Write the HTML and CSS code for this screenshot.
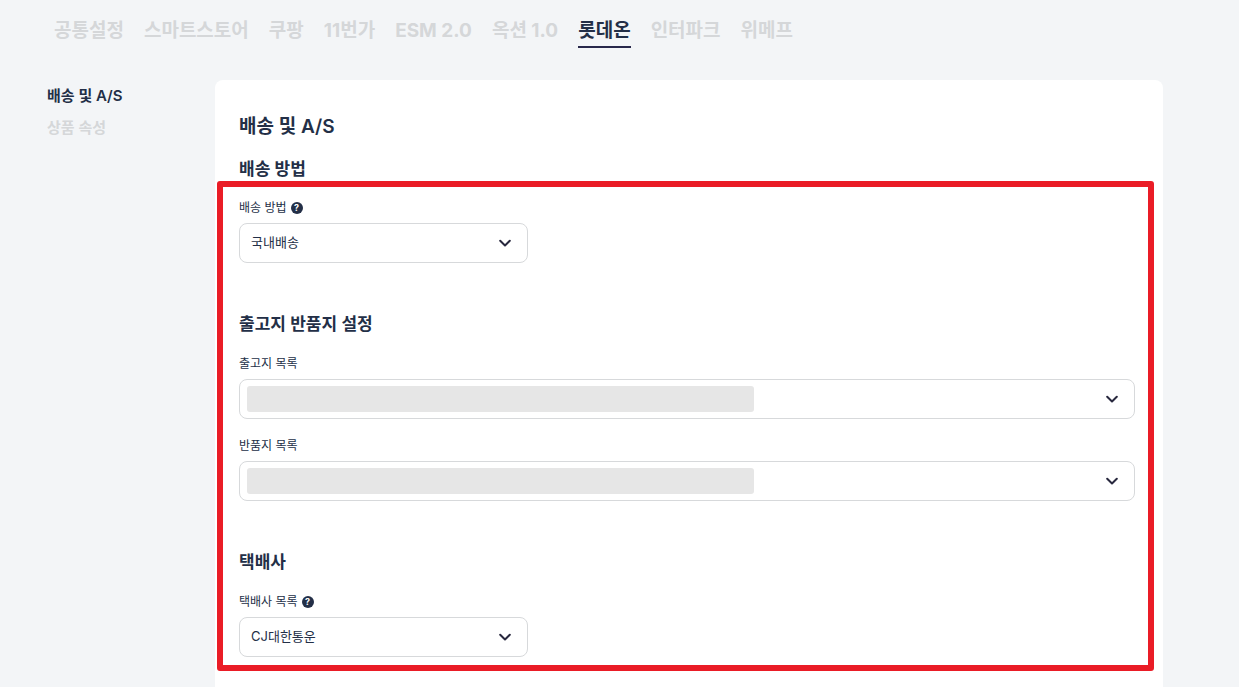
FILE: index.html
```html
<!DOCTYPE html>
<html lang="ko">
<head>
    <meta charset="UTF-8">
    <meta name="viewport" content="width=device-width, initial-scale=1.0">
    <title>롯데온 - 배송 및 A/S</title>
    <link rel="stylesheet" href="styles.css">
</head>
<body>
    <nav class="tabs">
        <a href="#" class="tab">공통설정</a>
        <a href="#" class="tab">스마트스토어</a>
        <a href="#" class="tab">쿠팡</a>
        <a href="#" class="tab">11번가</a>
        <a href="#" class="tab">ESM 2.0</a>
        <a href="#" class="tab">옥션 1.0</a>
        <a href="#" class="tab active">롯데온</a>
        <a href="#" class="tab">인터파크</a>
        <a href="#" class="tab">위메프</a>
    </nav>

    <div class="layout">
        <nav class="side-menu">
            <a href="#" class="side-link active">배송 및 A/S</a>
            <a href="#" class="side-link">상품 속성</a>
        </nav>

        <main class="card">
            <h1>배송 및 A/S</h1>
            <h2>배송 방법</h2>

            <div class="highlight">
                <section class="section">
                    <div class="field">
                        <div class="field-label">
                            <label for="delivery-method">배송 방법</label>
                            <button type="button" class="help-btn">?</button>
                        </div>
                        <div class="select-box short">
                            <select id="delivery-method">
                                <option>국내배송</option>
                            </select>
                            <svg class="chevron" viewBox="0 0 12 8"><path d="M1.2 1.700 6 6.500l4.800-4.800"/></svg>
                        </div>
                    </div>
                </section>

                <section class="section">
                    <h2>출고지 반품지 설정</h2>
                    <div class="field">
                        <div class="field-label">
                            <label for="ship-from">출고지 목록</label>
                        </div>
                        <div class="select-box">
                            <select id="ship-from">
                                <option></option>
                            </select>
                            <span class="masked"></span>
                            <svg class="chevron" viewBox="0 0 12 8"><path d="M1.2 1.700 6 6.500l4.800-4.800"/></svg>
                        </div>
                    </div>
                    <div class="field">
                        <div class="field-label">
                            <label for="return-to">반품지 목록</label>
                        </div>
                        <div class="select-box">
                            <select id="return-to">
                                <option></option>
                            </select>
                            <span class="masked"></span>
                            <svg class="chevron" viewBox="0 0 12 8"><path d="M1.2 1.700 6 6.500l4.800-4.800"/></svg>
                        </div>
                    </div>
                </section>

                <section class="section">
                    <h2>택배사</h2>
                    <div class="field">
                        <div class="field-label">
                            <label for="courier">택배사 목록</label>
                            <button type="button" class="help-btn">?</button>
                        </div>
                        <div class="select-box short">
                            <select id="courier">
                                <option>CJ대한통운</option>
                            </select>
                            <svg class="chevron" viewBox="0 0 12 8"><path d="M1.2 1.700 6 6.500l4.800-4.800"/></svg>
                        </div>
                    </div>
                </section>
            </div>
        </main>
    </div>
</body>
</html>
```
FILE: styles.css
```css
* {
    box-sizing: border-box;
}
body {
    font-family: Inter, 'Noto Sans CJK KR', sans-serif;
    background-color: #f3f5f7;
    color: #232f47;
    margin: 0;
    min-height: 100vh;
    display: flex;
    flex-direction: column;
}
a {
    color: #d5d7d9;
    text-decoration: none;
}
a.active {
    color: #232f47;
}
h1, h2 {
    margin: 0;
    font-weight: 600;
}
h1 {
    font-size: 19px;
    line-height: 28px;
    margin-bottom: 16px;
}
h2 {
    font-size: 17px;
    line-height: 24px;
}
.tabs {
    display: flex;
    gap: 20px;
    height: 80px;
    padding: 14px 54px 0;
}
.tab {
    height: 34px;
    font-size: 19px;
    line-height: 34px;
    font-weight: 700;
    white-space: nowrap;
}
.tab.active {
    border-bottom: 2px solid #28284b;
}
.layout {
    flex: 1;
    display: flex;
    padding: 0 76px 0 47px;
}
.side-menu {
    width: 168px;
    flex-shrink: 0;
    display: flex;
    flex-direction: column;
    gap: 8px;
    padding-top: 4px;
}
.side-link {
    font-size: 15px;
    line-height: 24px;
    font-weight: 600;
}
.card {
    flex: 1;
    background-color: #ffffff;
    border-radius: 8px 8px 0 0;
    padding-top: 33px;
}
.card > h1,
.card > h2 {
    padding-left: 24px;
}
.highlight {
    border: 6px solid #ea1c26;
    border-radius: 3px;
    margin: 0 9px 16px 2px;
    padding: 13px 13px 8px 16px;
}
.section + .section {
    margin-top: 49px;
}
.section h2 {
    margin-bottom: 20px;
}
.field + .field {
    margin-top: 19px;
}
.field-label {
    display: flex;
    align-items: center;
    gap: 4px;
    font-size: 12px;
    line-height: 16px;
    margin-bottom: 7px;
}
.help-btn {
    width: 12px;
    height: 12px;
    padding: 0;
    border: none;
    border-radius: 50%;
    background-color: #232f47;
    color: #ffffff;
    font-family: inherit;
    font-size: 9px;
    line-height: 12px;
    font-weight: 700;
    cursor: pointer;
}
.select-box {
    position: relative;
}
.select-box.short {
    max-width: 289px;
}
select {
    appearance: none;
    display: block;
    width: 100%;
    height: 40px;
    padding: 0 40px 2px 11px;
    border: 1px solid #d7d9db;
    border-radius: 8px;
    background-color: #ffffff;
    color: #232f47;
    font-family: inherit;
    font-size: 13px;
}
.chevron {
    position: absolute;
    right: 17px;
    top: 16px;
    width: 12px;
    height: 8px;
    fill: none;
    stroke: #28283e;
    stroke-width: 2;
    stroke-linecap: round;
    stroke-linejoin: round;
    pointer-events: none;
}
.masked {
    position: absolute;
    left: 8px;
    top: 7px;
    width: 507px;
    max-width: 80%;
    height: 26px;
    border-radius: 3px;
    background-color: #e6e6e6;
    pointer-events: none;
}
```
